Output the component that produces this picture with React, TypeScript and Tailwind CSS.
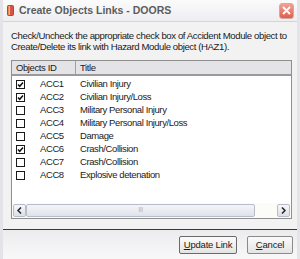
import { useState } from "react";

type Row = { id: string; title: string; checked: boolean };

const initialRows: Row[] = [
  { id: "ACC1", title: "Civilian Injury", checked: true },
  { id: "ACC2", title: "Civilian Injury/Loss", checked: true },
  { id: "ACC3", title: "Military Personal Injury", checked: false },
  { id: "ACC4", title: "Military Personal Injury/Loss", checked: false },
  { id: "ACC5", title: "Damage", checked: false },
  { id: "ACC6", title: "Crash/Collision", checked: true },
  { id: "ACC7", title: "Crash/Collision", checked: false },
  { id: "ACC8", title: "Explosive detenation", checked: false },
];

export default function App() {
  const [rows, setRows] = useState(initialRows);

  const toggle = (i: number) =>
    setRows((r) => r.map((row, j) => (j === i ? { ...row, checked: !row.checked } : row)));

  return (
    <div className="flex h-[259px] w-[300px] flex-col overflow-hidden border-x-[3px] border-[#e4e4e8] bg-[#f2f2f3] font-['Liberation_Sans',sans-serif] text-[9.5px] tracking-[-0.4px] text-[#1a1a1a]">
      {/* title bar */}
      <div className="-mx-[3px] flex h-[22px] shrink-0 items-center border-b border-[#d4d4d8] bg-gradient-to-b from-[#fbfbfc] to-[#eeeef1] pl-[7px] pr-[6px]">
        <BookIcon />
        <span className="ml-[5px] flex-1 text-[10.5px] font-bold tracking-[0px] text-[#5c5c5c]">Create Objects Links - DOORS</span>
        <button type="button" className="flex h-[16px] w-[15px] items-center justify-center rounded-[3px] border border-[#d6a8a2] bg-gradient-to-b from-[#f0a194] to-[#dc5f50]" aria-label="Close">
          <CloseIcon />
        </button>
      </div>

      <div className="flex flex-col pl-[8px] pr-[5px] pt-[8px]">
        <p className="text-[9.6px] leading-[11px]">
          Check/Uncheck the appropriate check box of Accident Module object to Create/Delete its link with Hazard Module object (HAZ1).
        </p>

        <div className="mt-[8px] flex h-[159px] flex-col border border-[#8f8f8f] bg-white">
          <div className="flex h-[15px] shrink-0 border-b-2 border-[#9a9a9a] bg-[#e4e4e8]">
            <div className="w-[64px] border-r border-[#a0a0a0] pl-[4px] leading-[13px]">Objects ID</div>
            <div className="flex-1 pl-[4px] leading-[13px]">Title</div>
          </div>
          <div className="flex-1 pt-[2px]">
            {rows.map((row, i) => (
              <div key={row.id} className="flex h-[13px] items-center">
                <button
                  type="button"
                  onClick={() => toggle(i)}
                  className="ml-[4px] flex h-[9px] w-[9px] items-center justify-center border border-[#1a1a1a] bg-white"
                >
                  {row.checked ? <CheckIcon /> : null}
                </button>
                <span className="ml-[15px] w-[40px]">{row.id}</span>
                <span>{row.title}</span>
              </div>
            ))}
          </div>
          {/* horizontal scrollbar */}
          <div className="flex h-[15px] shrink-0 items-center bg-[#fbfbf8] px-[1px]">
            <ArrowButton dir="left" />
            <div className="flex h-[13px] flex-1 items-center justify-center rounded-[2px] border border-[#b8bcc8] bg-gradient-to-b from-[#f4f5f9] to-[#dfe2ea] text-[7px] tracking-[-0.5px] text-[#b0b4c0]">
              III
            </div>
            <div className="w-[22px]" />
            <ArrowButton dir="right" />
          </div>
        </div>
      </div>

      <div className="-mx-[3px] mt-[10px] border-t border-[#3a3a3a]" />
      <div className="-mx-[3px] flex flex-1 items-center justify-end gap-[10px] bg-gradient-to-b from-[#ececee] to-[#f8f8f9] pr-[7px]">
        <button type="button" className="h-[18px] w-[58px] rounded-[2px] border border-[#6a6a6a] bg-gradient-to-b from-[#fbfbfb] to-[#e4e4e4] leading-[16px] tracking-[-0.2px]">
          <span className="underline">U</span>pdate Link
        </button>
        <button type="button" className="h-[18px] w-[46px] rounded-[2px] border border-[#8a8a8a] bg-gradient-to-b from-[#fbfbfb] to-[#e4e4e4] leading-[16px] tracking-[-0.2px]">
          <span className="underline">C</span>ancel
        </button>
      </div>
    </div>
  );
}

function ArrowButton({ dir }: { dir: "left" | "right" }) {
  return (
    <div className="flex h-[13px] w-[13px] items-center justify-center rounded-[2px] border border-[#b8bcc8] bg-gradient-to-b from-[#f6f7fa] to-[#dde0e8]">
      <svg className="h-[7px] w-[5px]" viewBox="0 0 5 7" aria-hidden>
        <path d={dir === "left" ? "M4 0.5L1 3.5L4 6.5" : "M1 0.5L4 3.5L1 6.5"} fill="none" stroke="#222" strokeWidth="1.5" />
      </svg>
    </div>
  );
}

function CheckIcon() {
  return (
    <svg className="h-[7px] w-[7px]" viewBox="0 0 7 7" aria-hidden>
      <path d="M1 3.5L2.7 5.3L6 1.5" fill="none" stroke="#111" strokeWidth="1.5" />
    </svg>
  );
}

function CloseIcon() {
  return (
    <svg className="h-[9px] w-[9px]" viewBox="0 0 9 9" aria-hidden>
      <path d="M1 1L8 8M8 1L1 8" stroke="#fff" strokeWidth="1.8" />
    </svg>
  );
}

function BookIcon() {
  return (
    <svg className="h-[11px] w-[7px]" viewBox="0 0 7 11" aria-hidden>
      <rect x="0.5" y="0.5" width="6" height="10" rx="1" fill="#d9534a" stroke="#b0453c" />
      <rect x="1.5" y="1" width="1.5" height="9" fill="#f2c04a" />
    </svg>
  );
}
